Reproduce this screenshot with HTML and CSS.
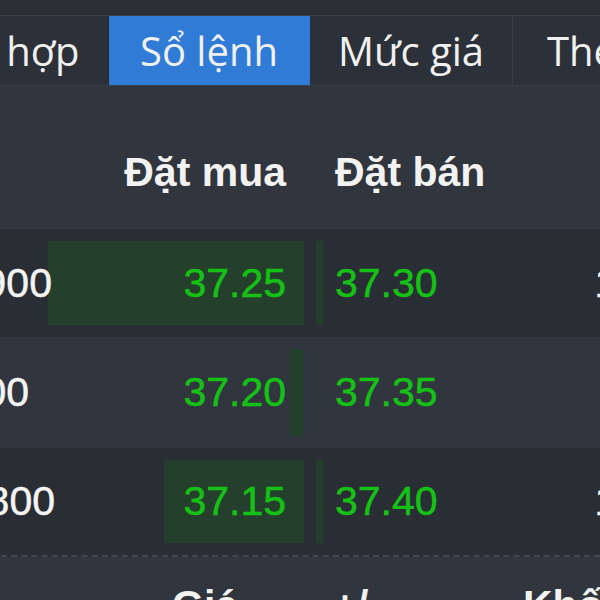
FILE: index.html
```html
<!DOCTYPE html>
<html lang="vi">
<head>
<meta charset="utf-8">
<title>Sổ lệnh</title>
<link rel="stylesheet" href="styles.css">
</head>
<body>
<div class="page">
  <div class="top-strip"></div>
  <nav class="tabs">
    <div class="tab tab-first">Tổng hợp</div>
    <div class="tab active">Sổ lệnh</div>
    <div class="tab">Mức giá</div>
    <div class="tab tab-last">Theo dõi</div>
  </nav>
  <section class="book">
    <div class="row head">
      <div class="cell vol"></div>
      <div class="cell buy">Đặt mua</div>
      <div class="cell sell">Đặt bán</div>
      <div class="cell vol-r"></div>
    </div>
    <div class="row dark">
      <div class="cell vol num">11900</div>
      <div class="cell buy"><span class="bar" style="width:256px"></span><span class="price num">37.25</span></div>
      <div class="cell sell"><span class="bar" style="width:7px"></span><span class="price num">37.30</span></div>
      <div class="cell vol-r num">1.500</div>
    </div>
    <div class="row light">
      <div class="cell vol num">1100</div>
      <div class="cell buy"><span class="bar" style="width:14px"></span><span class="price num">37.20</span></div>
      <div class="cell sell"><span class="bar faint" style="width:2px"></span><span class="price num">37.35</span></div>
      <div class="cell vol-r num">800</div>
    </div>
    <div class="row dark last">
      <div class="cell vol num">10800</div>
      <div class="cell buy"><span class="bar" style="width:140px"></span><span class="price num">37.15</span></div>
      <div class="cell sell"><span class="bar" style="width:7px"></span><span class="price num">37.40</span></div>
      <div class="cell vol-r num">1.200</div>
    </div>
  </section>
  <div class="foot-head">
    <span class="fh-price">Giá</span>
    <span class="fh-change">+/-</span>
    <span class="fh-vol">Khối lượng</span>
  </div>
</div>
</body>
</html>
```
FILE: styles.css
```css
* { box-sizing: border-box; }
html, body {
  margin: 0;
  padding: 0;
  background: #30353e;
  overflow: hidden;
}
.page {
  width: 600px;
  height: 600px;
  overflow: hidden;
  background: #30353e;
  font-family: "Liberation Sans", Arial, sans-serif;
  color: #f2f2f2;
}
.top-strip {
  height: 15px;
  background: #2a2e35;
}
.tabs {
  display: flex;
  height: 71px;
  margin-left: -95px;
  background: #2c3038;
  border-top: 1px solid #3b3f47;
  border-bottom: 1px solid #3b3f47;
  font-family: "Open Sans", "Noto Sans", sans-serif;
  font-size: 40px;
}
.tab {
  flex: 0 0 203px;
  min-width: 0;
  overflow: hidden;
  display: flex;
  align-items: center;
  justify-content: center;
  white-space: nowrap;
  border-right: 1px solid #3a3e46;
  color: #f0f0f0;
}
.tab.active {
  background: #2f7bd6;
  border-right-color: #2f7bd6;
  flex-basis: 201px;
}
.tab-first {
  flex-basis: 204px;
  padding-right: 30px;
  border-right-color: #25282e;
}
.tab-last {
  padding-left: 28px;
}
.book {
  margin-left: -59px;
}
.row {
  display: grid;
  grid-template-columns: 107px 256px 256px 137px;
  align-items: stretch;
  font-size: 41px;
  height: 108px;
}
.row.head {
  height: 143px;
  font-weight: bold;
  align-items: start;
  padding-top: 63px;
}
.row.dark { background: #292d34; }
.row.light { background: #30353e; height: 111px; }
.row.last { border-bottom: 2px dashed #42474f; height: 109px; }
.cell {
  position: relative;
  display: flex;
  align-items: center;
  white-space: nowrap;
}
.head .cell { align-items: flex-start; }
.num { -webkit-text-stroke: 0.5px currentColor; }
.cell.vol {
  justify-content: flex-start;
  color: #f4f4f4;
  z-index: 1;
}
.cell.buy {
  justify-content: flex-end;
  padding-right: 18px;
}
.cell.sell {
  margin-left: 12px;
  justify-content: flex-start;
  padding-left: 19px;
}
.cell.vol-r {
  margin-left: 12px;
  justify-content: flex-end;
  color: #f4f4f4;
}
.bar {
  position: absolute;
  top: 12px;
  bottom: 12px;
  background: #253f2d;
}
.buy .bar { right: 0; }
.sell .bar { left: 0; }
.bar.faint { background: #2b3c31; }
.price {
  position: relative;
  color: #16c116;
}
.foot-head {
  display: flex;
  padding-top: 25px;
  padding-left: 172px;
  font-size: 41px;
  font-weight: bold;
  white-space: nowrap;
}
.foot-head span { flex-shrink: 0; }
.fh-price { width: 161px; }
.fh-change { width: 190px; }
```
